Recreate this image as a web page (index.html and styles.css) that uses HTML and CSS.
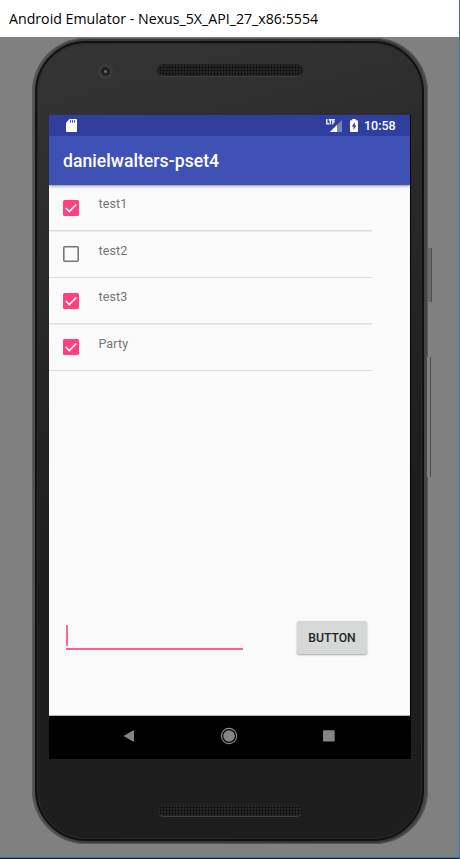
FILE: index.html
```html
<!DOCTYPE html>
<html lang="en">
<head>
<meta charset="utf-8">
<title>Android Emulator</title>
<link rel="stylesheet" href="styles.css">
</head>
<body>
<div class="window">
  <header class="titlebar"><span class="window-title">Android Emulator - Nexus_5X_API_27_x86:5554</span></header>
  <main class="desktop">
    <div class="phone">
      <i class="side-key power"></i>
      <i class="side-key volume"></i>
      <div class="face">
        <div class="bezel-top"><i class="camera"></i><i class="speaker"></i></div>
        <div class="screen">
          <div class="statusbar">
            <svg class="sd" width="11" height="13" viewBox="0 0 11 13"><path fill="#fff" d="M3.6 0H10Q11 0 11 1V12Q11 13 10 13H1Q0 13 0 12V3.7Z"/><path stroke="#303f9f" stroke-width="1" d="M4.5 1.2V3.6M6.5 1.2V3.6M8.5 1.2V3.6"/></svg>
            <svg class="signal" width="17" height="14" viewBox="0 0 17 14"><path fill="#7883c1" d="M16 1V13H4Z"/><path fill="#fff" d="M11 6V13H4Z"/><path fill="none" stroke="#e8eaf6" stroke-width="1.5" d="M.8 0V4.8H3M2.6 .7H6M4.3 .6V5.4M9 .7H6.8V5.4M6.8 2.8H8.7"/></svg>
            <svg class="battery" width="8" height="13" viewBox="0 0 8 13"><path fill="#fff" d="M2.3 0H5.7V1.2H7Q8 1.2 8 2.2V12Q8 13 7 13H1Q0 13 0 12V2.2Q0 1.2 1 1.2H2.3Z"/><path fill="#303f9f" d="M4.8 3.3 1.8 7.6H3.6V11L6.3 6.6H4.8Z"/></svg>
            <span class="clock">10:58</span>
          </div>
          <div class="appbar"><h1>danielwalters-pset4</h1></div>
          <div class="content">
            <ul class="todos">
              <li><svg class="check" viewBox="0 0 16 16"><rect width="16" height="16" rx="1.5" fill="#ff4081"/><path d="m2.8 8 3.5 3.6 7-7.1" fill="none" stroke="#fff" stroke-width="1.7"/></svg><span>test1</span></li>
              <li><svg class="check" viewBox="0 0 16 16"><rect x=".8" y=".8" width="14.4" height="14.4" rx="1" fill="none" stroke="#757575" stroke-width="1.6"/></svg><span>test2</span></li>
              <li><svg class="check" viewBox="0 0 16 16"><rect width="16" height="16" rx="1.5" fill="#ff4081"/><path d="m2.8 8 3.5 3.6 7-7.1" fill="none" stroke="#fff" stroke-width="1.7"/></svg><span>test3</span></li>
              <li><svg class="check" viewBox="0 0 16 16"><rect width="16" height="16" rx="1.5" fill="#ff4081"/><path d="m2.8 8 3.5 3.6 7-7.1" fill="none" stroke="#fff" stroke-width="1.7"/></svg><span>Party</span></li>
            </ul>
            <div class="entry">
              <div class="field"><i class="caret"></i></div>
              <button class="add">BUTTON</button>
            </div>
          </div>
          <nav class="navbar">
            <svg width="18" height="18" viewBox="0 0 18 18"><path fill="#858585" stroke="#858585" stroke-linejoin="round" d="M4.3 9 13.5 3.8V14.2Z"/></svg>
            <svg width="18" height="18" viewBox="0 0 18 18"><circle cx="9" cy="9" r="7.6" fill="none" stroke="#8b8b8b" stroke-width="1.1"/><circle cx="9" cy="9" r="5.8" fill="#858585"/></svg>
            <svg width="18" height="18" viewBox="0 0 18 18"><rect x="3" y="3.2" width="11.7" height="11.2" rx=".6" fill="#858585"/></svg>
          </nav>
        </div>
        <i class="speaker bottom"></i>
      </div>
    </div>
  </main>
</div>
</body>
</html>
```
FILE: styles.css
```css
* { box-sizing: border-box; }
body { margin: 0; font-family: Roboto, sans-serif; }
i { display: block; }
.window {
  width: 460px;
  height: 859px;
  display: flex;
  flex-direction: column;
  background: #808080;
  border-right: 1px solid #2878b8;
  border-bottom: 1px solid #17232c;
  overflow: hidden;
}
.titlebar {
  height: 37px;
  flex: none;
  background: #fff;
  padding: 8px 0 0 9px;
  font: 15px/20px "Open Sans", "Noto Sans", sans-serif;
  color: #000;
  white-space: nowrap;
}
.window-title { display: inline-block; transform: scaleX(.945); transform-origin: 0 0; }
.desktop { flex: 1; padding: 1px 0 0 32px; border-bottom: 1px solid #2878b8; }
.phone {
  position: relative;
  width: 396px;
  height: 806px;
  padding: 3px 4px 3px 3px;
  border-radius: 54px;
  background: linear-gradient(90deg, #545252, #3c3b3b 12%, #333 88%, #484545);
  box-shadow: inset 0 0 1px 1px #5c5b5b;
}
.side-key { position: absolute; border-right: 1px solid #504b4c; }
.power { left: 396px; top: 210px; width: 4px; height: 54px; background: #6c6a6a; }
.volume { left: 395px; top: 319px; width: 4px; height: 120px; background: #808080; }
.face {
  height: 800px;
  padding: 0 12px 0 12px;
  border: 2px solid #111;
  border-radius: 51px;
  background: linear-gradient(165deg, #353535, #272727 32%, #1d1d1d 60%, #1e1e1f);
  box-shadow: inset 0 0 1px 1px #2b2b2b;
}
.bezel-top { height: 72px; display: flex; padding: 21px 0 0 49px; }
.camera {
  width: 15px;
  height: 15px;
  border-radius: 50%;
  background: radial-gradient(circle, #756066 0 1px, #202027 2px 4px, #3b3b3b 5px);
}
.speaker {
  width: 146px;
  height: 13px;
  margin-left: 44px;
  border: 1px solid #202020;
  border-bottom-color: #3c3c3c;
  border-radius: 7px;
  background: radial-gradient(circle, #0c0c0c 0 .6px, #262626 1.4px) 1px 1px / 3px 3px;
}
.bottom { margin: 45px 0 0 108px; }
.screen {
  width: 362px;
  height: 644px;
  display: flex;
  flex-direction: column;
  background: #000;
}
.statusbar {
  width: 361px;
  height: 21px;
  display: flex;
  align-items: center;
  padding: 0 14px 0 17px;
  background: #303f9f;
}
.sd { margin-right: auto; }
.battery { margin: 0 6px 0 7px; }
.clock { color: #fff; font-size: 12.5px; font-weight: 500; line-height: 20px; width: 32px; white-space: nowrap; }
.appbar {
  width: 361px;
  height: 49px;
  padding: 1px 0 0 14px;
  display: flex;
  align-items: center;
  background: #3f51b5;
  box-shadow: 0 1px 3px rgba(0,0,0,.45);
  clip-path: inset(0 0 -5px 0);
  z-index: 1;
}
h1 { margin: 0; color: #fff; font-size: 17.6px; font-weight: 500; line-height: 24px; letter-spacing: .04px; }
.content { width: 361px; height: 531px; background: #fafafa; border-bottom: 1px solid #b5b5b5; }
.todos { list-style: none; margin: 0; padding: 0; width: 323px; }
.todos li {
  height: 46.5px;
  display: flex;
  padding: 15px 0 0 14px;
  background: linear-gradient(#dedede, #dedede) left bottom / 100% 1.5px no-repeat;
  color: #757575;
  font-size: 12.5px;
}
.check { width: 16px; height: 16px; margin: -.4px 19px 0 .4px; }
.todos span { line-height: 16px; margin-top: -4px; letter-spacing: .15px; }
.entry { display: flex; padding: 250px 0 0 17px; }
.field { width: 177px; height: 29px; padding-top: 4px; border-bottom: 2px solid #ff5c93; }
.caret { width: 2px; height: 21px; background: #ff6798; }
.add {
  width: 70px;
  height: 33px;
  margin-left: 54px;
  padding: 0;
  border: 0;
  border-radius: 2px;
  background: #d6d8d7;
  box-shadow: 0 1px 2px rgba(0,0,0,.35);
  color: #252525;
  font: 500 12.2px Roboto, sans-serif;
}
.navbar { height: 43px; display: flex; align-items: center; justify-content: space-between; padding: 0 73px 3px 71px; }
```
